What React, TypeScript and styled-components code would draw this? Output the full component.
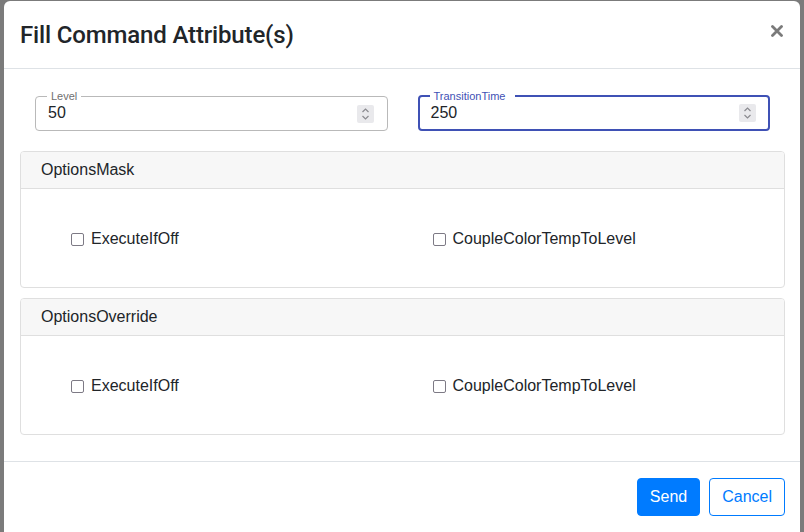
import React from 'react'
import styled, { createGlobalStyle } from 'styled-components'

const GlobalStyle = createGlobalStyle`
  html, body {
    margin: 0;
    padding: 0;
    background: #7b7b7b;
    font-family: "Liberation Sans", Arial, sans-serif;
    color: #212529;
  }
  * { box-sizing: border-box; }
`

// Styled components

const Backdrop = styled.div`
  width: 804px;
  height: 532px;
  overflow: hidden;
  padding: 1px 4px 0 4px;
`

const Modal = styled.div`
  background: #fff;
  border-radius: 6px 6px 0 0;
  width: 796px;
  min-height: 560px;
  display: flex;
  flex-direction: column;
`

const Header = styled.header`
  display: flex;
  align-items: center;
  justify-content: space-between;
  padding: 16px 15px 16px 16px;
  height: 68px;
  border-bottom: 1px solid #dee2e6;
`

const Title = styled.h5`
  margin: 0;
  font-family: Roboto, "Liberation Sans", sans-serif;
  font-size: 24px;
  font-weight: 500;
  letter-spacing: -0.15px;
  line-height: 36px;
  color: #212529;
`

const CloseButton = styled.button`
  border: none;
  background: none;
  padding: 0;
  margin: -8px 1px 0 0;
  width: 14px;
  height: 14px;
  display: flex;
  align-items: center;
  justify-content: center;
  cursor: pointer;
`

const Body = styled.div`
  padding: 16px 15px 26px 16px;
  display: flex;
  flex-direction: column;
`

const FieldRow = styled.div`
  display: grid;
  grid-template-columns: 1fr 1fr;
  padding-top: 11px;
  margin-bottom: 15px;
`

const FieldCol = styled.div`
  padding: 0 15px;
`

const Field = styled.fieldset<{ $focused?: boolean }>`
  margin: 0;
  height: 40px;
  padding: 0 13px 0 12px;
  border: ${(p) => (p.$focused ? '2px solid #3f51b5' : '1px solid #b9b9b9')};
  border-radius: 4px;
  display: flex;
  align-items: center;
  position: relative;
  top: -5px;
  ${(p) => (p.$focused ? 'padding-left: 11px; padding-right: 12px;' : '')}
`

const Legend = styled.legend<{ $focused?: boolean }>`
  font-size: 11px;
  line-height: 10px;
  padding: 0 4px;
  margin-left: -1px;
  color: ${(p) => (p.$focused ? '#3f51b5' : '#6f6f6f')};
  ${(p) => (p.$focused ? 'padding-right: 10px;' : '')}
`

const Value = styled.span`
  flex: 1;
  font-size: 16px;
  color: #212529;
  margin-top: -5px;
`

const Spinner = styled.span`
  width: 17px;
  height: 18px;
  background: #e9e9ec;
  border-radius: 2px;
  display: flex;
  align-items: center;
  justify-content: center;
  margin-top: -4px;
`

const Card = styled.section`
  border: 1px solid #dfdfdf;
  border-radius: 4px;
  overflow: hidden;
  & + & {
    margin-top: 10px;
  }
`

const CardHeader = styled.div`
  background: #f7f7f7;
  border-bottom: 1px solid #dfdfdf;
  height: 37px;
  padding: 0 20px;
  display: flex;
  align-items: center;
  font-size: 16px;
  color: #212529;
`

const CardBody = styled.div`
  display: grid;
  grid-template-columns: 1fr 1fr;
  padding: 20px 20px;
  height: 98px;
  align-items: center;
`

const Check = styled.label`
  display: flex;
  align-items: center;
  gap: 7px;
  padding-left: 30px;
  font-size: 16px;
  color: #212529;
  margin-top: 2px;
`

const Box = styled.span`
  width: 13px;
  height: 13px;
  border: 1px solid #7d7a85;
  border-radius: 2px;
  background: #fff;
`

const Footer = styled.footer`
  border-top: 1px solid #dee2e6;
  padding: 16px 15px 16px 16px;
  display: flex;
  justify-content: flex-end;
  gap: 9px;
`

const Button = styled.button<{ $outline?: boolean }>`
  font-family: inherit;
  font-size: 16px;
  height: 38px;
  padding: 0 12px;
  border-radius: 4px;
  border: 1px solid #007bff;
  background: ${(p) => (p.$outline ? '#fff' : '#007bff')};
  color: ${(p) => (p.$outline ? '#007bff' : '#fff')};
  cursor: pointer;
`

function SpinIcon() {
  return (
    <Spinner>
      <svg width="9" height="14" viewBox="0 0 9 14" fill="none">
        <path d="M1.5 5 L4.5 2 L7.5 5" stroke="#8a8a8f" strokeWidth="1.2" />
        <path d="M1.5 9 L4.5 12 L7.5 9" stroke="#8a8a8f" strokeWidth="1.2" />
      </svg>
    </Spinner>
  )
}

function NumberField({ label, value, focused }: { label: string; value: string; focused?: boolean }) {
  return (
    <Field $focused={focused}>
      <Legend $focused={focused}>{label}</Legend>
      <Value>{value}</Value>
      <SpinIcon />
    </Field>
  )
}

function OptionsCard({ title }: { title: string }) {
  return (
    <Card>
      <CardHeader>{title}</CardHeader>
      <CardBody>
        <Check>
          <Box />
          ExecuteIfOff
        </Check>
        <Check>
          <Box />
          CoupleColorTempToLevel
        </Check>
      </CardBody>
    </Card>
  )
}

export default function App() {
  return (
    <Backdrop>
      <GlobalStyle />
      <Modal>
        <Header>
          <Title>Fill Command Attribute(s)</Title>
          <CloseButton aria-label="Close">
            <svg width="12" height="12" viewBox="0 0 12 12">
              <path d="M1.5 1.5 L10.5 10.5 M10.5 1.5 L1.5 10.5" stroke="#7a7a7a" strokeWidth="2.8" strokeLinecap="round" />
            </svg>
          </CloseButton>
        </Header>
        <Body>
          <FieldRow>
            <FieldCol>
              <NumberField label="Level" value="50" />
            </FieldCol>
            <FieldCol>
              <NumberField label="TransitionTime" value="250" focused />
            </FieldCol>
          </FieldRow>
          <OptionsCard title="OptionsMask" />
          <OptionsCard title="OptionsOverride" />
        </Body>
        <Footer>
          <Button>Send</Button>
          <Button $outline>Cancel</Button>
        </Footer>
      </Modal>
    </Backdrop>
  )
}
